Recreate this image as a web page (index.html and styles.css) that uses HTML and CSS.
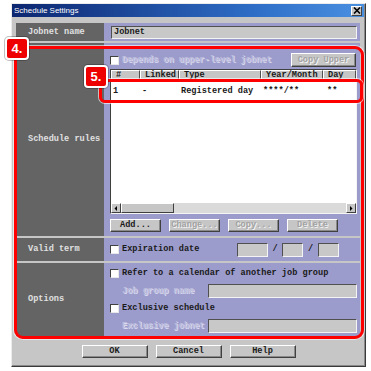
FILE: index.html
```html
<!DOCTYPE html>
<html lang="en">
<head>
    <meta charset="UTF-8">
    <meta name="viewport" content="width=device-width, initial-scale=1">
    <title>Schedule Settings</title>
    <link rel="stylesheet" href="styles.css">
</head>
<body>
<div class="stage">
    <div class="window">
        <div class="titlebar">
            <span class="title">Schedule Settings</span>
            <span class="close">
                <svg width="8" height="7" viewBox="0 0 8 7"><path d="M1 0.5 L7 6.5 M7 0.5 L1 6.5" stroke="#000" stroke-width="1.6"/></svg>
            </span>
        </div>

        <div class="rows">
            <div class="row row-name">
                <div class="label">Jobnet name</div>
                <div class="field name-field">
                    <div class="textbox">Jobnet</div>
                </div>
            </div>

            <div class="row row-rules">
                <div class="label">Schedule rules</div>
                <div class="field rules">
                    <div class="rules-top">
                        <div class="check disabled"><span class="box"></span>Depends on upper-level jobnet</div>
                        <div class="btn btn-copy disabled">Copy Upper</div>
                    </div>
                    <div class="list">
                        <div class="list-head">
                            <span class="hcell">#</span>
                            <span class="hcell">Linked</span>
                            <span class="hcell">Type</span>
                            <span class="hcell">Year/Month</span>
                            <span class="hcell">Day</span>
                        </div>
                        <div class="list-body">
                            <div class="list-row">
                                <span class="cell">1</span>
                                <span class="cell">-</span>
                                <span class="cell">Registered day</span>
                                <span class="cell">****/**</span>
                                <span class="cell cell-day">**</span>
                            </div>
                        </div>
                        <div class="hscroll">
                            <span class="arrow"><svg width="4" height="5" viewBox="0 0 4 5"><path d="M3 0 L0.5 2.5 L3 5 Z" fill="#000"/></svg></span>
                            <span class="track"><span class="thumb"></span></span>
                            <span class="arrow"><svg width="4" height="5" viewBox="0 0 4 5"><path d="M1 0 L3.5 2.5 L1 5 Z" fill="#000"/></svg></span>
                        </div>
                    </div>
                    <div class="rules-buttons">
                        <div class="btn">Add...</div>
                        <div class="btn disabled">Change...</div>
                        <div class="btn disabled">Copy...</div>
                        <div class="btn disabled">Delete</div>
                    </div>
                </div>
            </div>

            <div class="row row-valid">
                <div class="label">Valid term</div>
                <div class="field valid">
                    <div class="check check-wide"><span class="box"></span>Expiration date</div>
                    <div class="textbox date date-year"></div>
                    <span class="slash">/</span>
                    <div class="textbox date"></div>
                    <span class="slash">/</span>
                    <div class="textbox date"></div>
                </div>
            </div>

            <div class="row row-options">
                <div class="label">Options</div>
                <div class="field options">
                    <div class="check"><span class="box"></span>Refer to a calendar of another job group</div>
                    <div class="subfield">
                        <span class="sublabel disabled">Job group name</span>
                        <div class="textbox"></div>
                    </div>
                    <div class="check check-excl"><span class="box"></span>Exclusive schedule</div>
                    <div class="subfield">
                        <span class="sublabel disabled">Exclusive jobnet</span>
                        <div class="textbox"></div>
                    </div>
                </div>
            </div>
        </div>

        <div class="dialog-buttons">
            <div class="btn btn-wide">OK</div>
            <div class="btn btn-wide">Cancel</div>
            <div class="btn btn-wide">Help</div>
        </div>
    </div>

    <!-- callouts over the dialog -->
    <div class="callout callout-4"></div>
    <div class="callout callout-5"></div>
    <div class="tag tag-4">4.</div>
    <div class="tag tag-5">5.</div>
</div>
</body>
</html>
```

FILE: styles.css
```css
body {
    margin: 0;
    background-color: #fff;
    font-family: 'Liberation Mono', 'DejaVu Sans Mono', monospace;
    font-size: 8.6px;
    font-weight: bold;
    line-height: 1;
    color: #1a1a1a;
}
.stage {
    position: relative;
    width: 371px;
    height: 371px;
    padding: 3px 0 0 11px;
    box-sizing: border-box;
}
.window {
    width: 355px;
    height: 364px;
    box-sizing: border-box;
    border: 1px solid;
    border-color: #ececec #3a3a3a #3a3a3a #ececec;
    box-shadow: inset -1px -1px 0 #8a8a8a;
    background-color: #c6c6c6;
    display: flex;
    flex-direction: column;
}
.titlebar {
    height: 13px;
    margin-right: 1px;
    display: flex;
    align-items: center;
    justify-content: space-between;
    padding: 0 2px 0 2px;
    background: linear-gradient(to right, #0c2670, #2f6fc8 70%, #4a90e0);
}
.title {
    font-family: 'Liberation Sans', Arial, sans-serif;
    font-size: 8px;
    font-weight: normal;
    color: #fff;
}
.close {
    width: 11px;
    height: 10px;
    box-sizing: border-box;
    border: 1px solid;
    border-color: #fff #404040 #404040 #fff;
    background-color: #c6c6c6;
    display: flex;
    align-items: center;
    justify-content: center;
}
.rows {
    padding: 6px 5px 0 4px;
}
.row {
    display: grid;
    grid-template-columns: 88px 1fr;
    margin-top: 2px;
}
.row-name {
    height: 18px;
    margin-top: 0;
}
.row-rules {
    height: 193px;
}
.row-valid {
    height: 23px;
}
.row-options {
    height: 73px;
}
.label {
    background-color: #646464;
    color: #e0e0e0;
    padding-left: 12px;
    display: flex;
    align-items: center;
}
.field {
    background-color: #9c9ccc;
}
.name-field {
    display: flex;
    align-items: center;
    padding: 0 3px 0 7px;
}
.textbox {
    flex: 1;
    height: 14px;
    box-sizing: border-box;
    border: 1px solid;
    border-color: #505050 #f4f4f4 #f4f4f4 #505050;
    background-color: #c8c8c8;
    padding-left: 2px;
    display: flex;
    align-items: center;
}
.name-field .textbox {
    height: 13px;
}
.disabled {
    color: #a2a2a2;
    text-shadow: 1px 1px 0 #f4f4f4;
}
.field .disabled {
    color: #bcbcdc;
    text-shadow: 1px 1px 0 #d8d8ee;
}

/* schedule rules */
.rules {
    padding: 10px 4px 4px 6px;
    display: flex;
    flex-direction: column;
}
.rules-top {
    height: 14px;
    display: flex;
    align-items: center;
    justify-content: space-between;
}
.check {
    display: flex;
    align-items: center;
    gap: 3px;
    height: 14px;
}
.box {
    width: 9px;
    height: 9px;
    box-sizing: border-box;
    border: 1px solid;
    border-color: #404040 #e8e8e8 #e8e8e8 #404040;
    background-color: #fff;
}
.btn {
    width: 51px;
    height: 13px;
    box-sizing: border-box;
    border: 1px solid;
    border-color: #fff #404040 #404040 #fff;
    box-shadow: inset -1px -1px 0 #8a8a8a;
    background-color: #c6c6c6;
    display: flex;
    align-items: center;
    justify-content: center;
}
.field .btn.disabled {
    color: #a2a2a2;
    text-shadow: 1px 1px 0 #f4f4f4;
}
.btn-copy {
    width: 65px;
    height: 14px;
}
.list {
    margin-top: 2px;
    margin-right: -1px;
    height: 145px;
    box-sizing: border-box;
    border: 1px solid;
    border-color: #404040 #f4f4f4 #f4f4f4 #404040;
    background-color: #fff;
    display: flex;
    flex-direction: column;
}
.list-head,
.list-row {
    display: grid;
    grid-template-columns: 29px 39px 82px 62px 1fr;
}
.hcell {
    height: 11px;
    box-sizing: border-box;
    border: 1px solid;
    border-color: #fff #505050 #505050 #fff;
    background-color: #c6c6c6;
    padding-left: 4px;
    display: flex;
    align-items: center;
}
.list-body {
    flex: 1;
    padding-top: 4px;
}
.list-row {
    height: 13px;
    align-items: center;
}
.cell {
    padding-left: 2px;
}
.cell-day {
    padding-left: 4px;
}
.hscroll {
    height: 10px;
    display: flex;
}
.arrow {
    width: 10px;
    height: 10px;
    box-sizing: border-box;
    border: 1px solid;
    border-color: #fff #404040 #404040 #fff;
    background-color: #c6c6c6;
    display: flex;
    align-items: center;
    justify-content: center;
}
.track {
    flex: 1;
    background-color: #dadada;
}
.thumb {
    display: block;
    width: 53px;
    height: 10px;
    box-sizing: border-box;
    border: 1px solid;
    border-color: #fff #404040 #404040 #fff;
    background-color: #c6c6c6;
}
.rules-buttons {
    margin-top: 5px;
    display: flex;
    gap: 8px;
}

/* valid term */
.valid {
    display: flex;
    align-items: center;
    padding-left: 6px;
}
.check-wide {
    width: 127px;
}
.date {
    flex: none;
    width: 21px;
}
.date-year {
    width: 31px;
}
.slash {
    width: 14px;
    text-align: center;
}
.slash + .date + .slash {
    width: 15px;
}

/* options */
.options {
    padding: 3px 3px 0 6px;
    display: flex;
    flex-direction: column;
}
.subfield {
    margin-top: 4px;
    height: 14px;
    display: flex;
    align-items: center;
    padding-left: 12px;
}
.sublabel {
    width: 86px;
}
.check-excl {
    margin-top: 3px;
}

.dialog-buttons {
    margin-top: 9px;
    display: flex;
    justify-content: center;
    gap: 8px;
}
.btn-wide {
    width: 66px;
}

/* red callouts */
.callout {
    position: absolute;
    box-sizing: border-box;
    border: 3px solid #f00;
    box-shadow: 0 0 0 1px rgba(255, 255, 255, 0.6);
}
.callout-4 {
    left: 14px;
    top: 46px;
    width: 350px;
    height: 293px;
    border-radius: 9px;
}
.callout-5 {
    left: 99px;
    top: 79px;
    width: 264px;
    height: 24px;
    border-radius: 6px;
}
.tag {
    position: absolute;
    width: 24px;
    height: 23px;
    box-sizing: border-box;
    border: 2px solid #fff;
    border-radius: 4px;
    background-color: #ee0000;
    box-shadow: 0 0 0 1px rgba(0, 0, 0, 0.25);
    color: #fff;
    font-family: 'Liberation Sans', Arial, sans-serif;
    font-weight: bold;
    font-size: 13px;
    display: flex;
    align-items: center;
    justify-content: center;
}
.tag-4 {
    left: 5px;
    top: 37px;
}
.tag-5 {
    left: 84px;
    top: 65px;
}
```
